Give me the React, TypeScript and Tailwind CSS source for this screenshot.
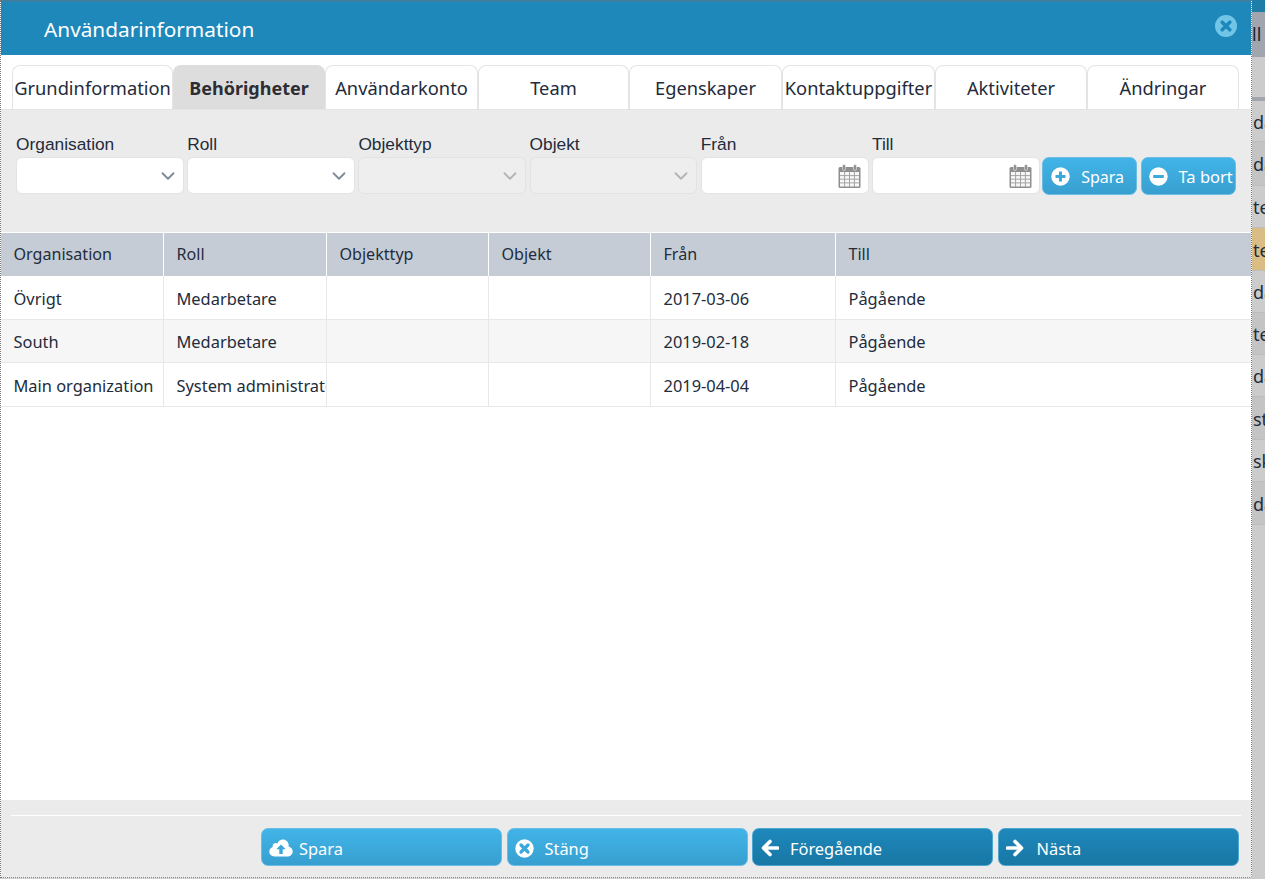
import React from "react";
import { ChevronDown } from "lucide-react";

const segoe = "font-['Noto_Sans','Open_Sans',sans-serif]";

const tabs = [
  { name: "Grundinformation", w: "w-[161px]" },
  { name: "Behörigheter", w: "w-[152px]", active: true },
  { name: "Användarkonto", w: "w-[153px]" },
  { name: "Team", w: "w-[151px]" },
  { name: "Egenskaper", w: "w-[153px]" },
  { name: "Kontaktuppgifter", w: "w-[153px]" },
  { name: "Aktiviteter", w: "w-[152px]" },
  { name: "Ändringar", w: "w-[152px]" },
];

const columns = [
  { name: "Organisation", w: "w-[163px]" },
  { name: "Roll", w: "w-[163px]" },
  { name: "Objekttyp", w: "w-[162px]" },
  { name: "Objekt", w: "w-[162px]" },
  { name: "Från", w: "w-[185px]" },
  { name: "Till", w: "flex-1" },
];

const rows = [
  ["Övrigt", "Medarbetare", "", "", "2017-03-06", "Pågående"],
  ["South", "Medarbetare", "", "", "2019-02-18", "Pågående"],
  ["Main organization", "System administratör", "", "", "2019-04-04", "Pågående"],
];

// what peeks out from the page behind the dialog
const behind = [
  { h: "h-[41px]", bg: "bg-[#cccccc]", text: "da" },
  { h: "h-[44px]", bg: "bg-[#c4c4c4]", text: "da" },
  { h: "h-[42px]", bg: "bg-[#cccccc]", text: "te" },
  { h: "h-[43px]", bg: "bg-[#d9bd85]", text: "te" },
  { h: "h-[42px]", bg: "bg-[#cccccc]", text: "da" },
  { h: "h-[42px]", bg: "bg-[#c4c4c4]", text: "te" },
  { h: "h-[42px]", bg: "bg-[#cccccc]", text: "da" },
  { h: "h-[43px]", bg: "bg-[#c4c4c4]", text: "st" },
  { h: "h-[42px]", bg: "bg-[#cccccc]", text: "sk" },
  { h: "h-[43px]", bg: "bg-[#c4c4c4]", text: "da" },
];

function Calendar() {
  return (
    <svg width="23" height="24" viewBox="0 0 23 24" className="shrink-0">
      <rect x="0.5" y="3" width="22" height="21" rx="1.5" fill="#8f8f8f" />
      <rect x="2" y="8" width="19" height="14.5" fill="#f7f7f7" />
      <path d="M6.6 8v15M11.5 8v15M16.4 8v15M2 11.6h19M2 15.2h19M2 18.9h19" stroke="#a3a3a3" strokeWidth="1" />
      <rect x="4.5" y="0.5" width="3" height="6" rx="1.5" fill="#8f8f8f" stroke="#ebebeb" strokeWidth="0.6" />
      <rect x="15.5" y="0.5" width="3" height="6" rx="1.5" fill="#8f8f8f" stroke="#ebebeb" strokeWidth="0.6" />
    </svg>
  );
}

function CircleIcon({ kind, cut }: { kind: "plus" | "minus" | "close"; cut: string }) {
  return (
    <svg width="19" height="19" viewBox="0 0 19 19" className="shrink-0">
      <circle cx="9.5" cy="9.5" r="9.2" fill="#fff" />
      {kind === "plus" && <path d="M9.5 4.5v10M4.5 9.5h10" stroke={cut} strokeWidth="3" />}
      {kind === "minus" && <path d="M4.2 9.5h10.6" stroke={cut} strokeWidth="3" />}
      {kind === "close" && <path d="M6 6l7 7M13 6l-7 7" stroke={cut} strokeWidth="3.2" strokeLinecap="round" />}
    </svg>
  );
}

function CloudUp() {
  return (
    <svg width="24" height="18" viewBox="0 0 24 18" className="shrink-0">
      <path d="M5.5 17.5C2.5 17.5.3 15.3.3 12.6c0-2.3 1.4-4 3.4-4.7-.1-.3-.1-.6-.1-.9 0-1.7 1.4-3 3.1-3 .6 0 1.2.2 1.7.5C9.5 2 11.5.6 13.8.6c3.3 0 5.9 2.6 5.9 5.8 0 .4 0 .8-.1 1.1 2.3.6 4.1 2.6 4.1 5 0 2.8-2.3 5-5.2 5z" fill="#fff" />
      <path d="M12 5.5l4.7 4.8h-3V15h-3.4v-4.7h-3z" fill="#3ba6d8" />
    </svg>
  );
}

function ArrowIcon({ left }: { left?: boolean }) {
  return (
    <svg width="18" height="18" viewBox="0 0 18 18" className={left ? "shrink-0 -scale-x-100" : "shrink-0"}>
      <path d="M1.5 9h13M9 2.5L15.5 9 9 15.5" fill="none" stroke="#fff" strokeWidth="3.6" strokeLinejoin="round" strokeLinecap="round" />
    </svg>
  );
}

function SelectBox({ label, disabled }: { label: string; disabled?: boolean }) {
  return (
    <div className="w-[167.8px] shrink-0">
      <div className="h-[25px] font-['Liberation_Sans',sans-serif] text-[17.33px] leading-[25px] text-[#222c3c]">{label}</div>
      <div
        className={
          disabled
            ? "flex h-[37px] items-center justify-end rounded-[6px] border border-[#e3e3e3] bg-[#eeeeee] pr-[4px]"
            : "flex h-[37px] items-center justify-end rounded-[6px] border border-[#e3e3e3] bg-white pr-[4px]"
        }
      >
        <ChevronDown size={22} strokeWidth={2} className={disabled ? "text-[#b4b4b4]" : "text-[#7f8a99]"} />
      </div>
    </div>
  );
}

function DateBox({ label }: { label: string }) {
  return (
    <div className="w-[167.8px] shrink-0">
      <div className="h-[25px] font-['Liberation_Sans',sans-serif] text-[17.33px] leading-[25px] text-[#222c3c]">{label}</div>
      <div className="flex h-[37px] items-center justify-end rounded-[6px] border border-[#e3e3e3] bg-white pr-[7px]">
        <Calendar />
      </div>
    </div>
  );
}

export default function App() {
  return (
    <div className={`flex h-[879px] w-[1265px] overflow-hidden bg-[#cccccc] ${segoe}`}>
      {/* dialog */}
      <div className="flex h-[878px] w-[1252px] shrink-0 flex-col rounded-br-[4px] border-x border-b border-dotted border-[#777777] bg-white">
        <div className="h-[2px] shrink-0 bg-[#3d7f9f]" />
        <div className="relative flex h-[53px] shrink-0 items-center bg-[#1e88bb] pt-[2px] pl-[43px] text-[20.8px] text-white">
          Användarinformation
          <svg width="22" height="22" viewBox="0 0 23 23" className="absolute top-[13px] right-[14px]">
            <circle cx="11.5" cy="11.5" r="11.5" fill="#71c6e8" />
            <path d="M7.5 7.5l8 8M15.5 7.5l-8 8" stroke="#1e88bb" strokeWidth="3.8" strokeLinecap="round" />
          </svg>
        </div>

        {/* tabs */}
        <div className="flex h-[55px] shrink-0 items-end border-b border-[#e4e4e4] pl-[11px]">
          {tabs.map((t) => (
            <div
              key={t.name}
              className={
                t.active
                  ? `flex h-[44px] ${t.w} shrink-0 items-center justify-center rounded-t-[8px] bg-[#dddddd] pt-[3px] text-[18px] font-bold whitespace-nowrap text-[#2d2d33]`
                  : `flex h-[44px] ${t.w} shrink-0 items-center justify-center overflow-hidden rounded-t-[8px] border-x border-t border-[#e4e4e4] bg-white text-[18.3px] whitespace-nowrap text-[#232b3b]`
              }
            >
              {t.name}
            </div>
          ))}
        </div>

        {/* filter form */}
        <div className="flex h-[123px] shrink-0 items-start gap-[3.4px] border-b border-white bg-[#ebebeb] pt-[22px] pl-[15px]">
          <SelectBox label="Organisation" />
          <SelectBox label="Roll" />
          <SelectBox label="Objekttyp" disabled />
          <SelectBox label="Objekt" disabled />
          <DateBox label="Från" />
          <DateBox label="Till" />
          <button className="mt-[25px] -ml-px flex h-[38px] w-[95px] shrink-0 items-center gap-[11px] rounded-[7px] border border-[#6cbde3] bg-gradient-to-b from-[#41b4e8] to-[#389fd0] pl-[8px] text-[16px] text-white">
            <CircleIcon kind="plus" cut="#3ba9dc" />
            <span className="mt-[2px]">Spara</span>
          </button>
          <button className="mt-[25px] flex h-[38px] w-[95px] shrink-0 items-center gap-[11px] overflow-hidden rounded-[7px] border border-[#6cbde3] bg-gradient-to-b from-[#41b4e8] to-[#389fd0] pl-[7px] text-[16.5px] whitespace-nowrap text-white">
            <CircleIcon kind="minus" cut="#3ba9dc" />
            <span className="mt-[2px]">Ta bort</span>
          </button>
        </div>

        {/* table */}
        <div className="flex min-h-0 flex-1 flex-col">
          <div className="flex h-[43px] shrink-0 bg-[#c5ccd5] text-[16.1px] text-[#222c3c]">
            {columns.map((c) => (
              <div key={c.name} className={`${c.w} flex items-center border-r border-white pl-[12.5px] last:border-r-0`}>
                {c.name}
              </div>
            ))}
          </div>
          {rows.map((row, i) => (
            <div
              key={row[0]}
              className={
                i === 1
                  ? "flex h-[43.5px] shrink-0 border-b border-[#e8e8e8] bg-[#f6f6f6] text-[16.4px] text-[#222c3c]"
                  : "flex h-[43.5px] shrink-0 border-b border-[#e8e8e8] bg-white text-[16.4px] text-[#222c3c]"
              }
            >
              {row.map((cell, j) => (
                <div
                  key={j}
                  className={`${columns[j].w} flex items-center overflow-hidden border-r border-[#e8e8e8] pt-[4px] pl-[12.5px] whitespace-nowrap last:border-r-0`}
                >
                  {cell}
                </div>
              ))}
            </div>
          ))}
        </div>

        {/* footer */}
        <div className="h-[77px] shrink-0 bg-[#ebebeb] pt-[15px]">
          <div className="mx-[10px] h-px bg-white" />
          <div className="flex justify-end gap-[4.5px] pt-[12px] pr-[12.5px]">
            <button className="flex h-[38px] w-[241px] items-center gap-[6px] rounded-[7px] border border-[#6cbde3] bg-gradient-to-b from-[#41b4e8] to-[#389fd0] pt-[2px] pl-[7px] text-[16.4px] text-white">
              <CloudUp />
              <span className="mt-[2px]">Spara</span>
            </button>
            <button className="flex h-[38px] w-[241px] items-center gap-[11px] rounded-[7px] border border-[#6cbde3] bg-gradient-to-b from-[#41b4e8] to-[#389fd0] pt-[2px] pl-[7px] text-[16.4px] text-white">
              <CircleIcon kind="close" cut="#3ba9dc" />
              <span className="mt-[2px]">Stäng</span>
            </button>
            <button className="flex h-[38px] w-[241px] items-center gap-[11px] rounded-[7px] border border-[#4ba6d0] bg-gradient-to-b from-[#1e88bb] to-[#1877a5] pt-[2px] pl-[8px] text-[16.4px] text-white">
              <ArrowIcon left />
              <span className="mt-[2px]">Föregående</span>
            </button>
            <button className="flex h-[38px] w-[241px] items-center gap-[13px] rounded-[7px] border border-[#4ba6d0] bg-gradient-to-b from-[#1e88bb] to-[#1877a5] pt-[2px] pl-[7px] text-[16.4px] text-white">
              <ArrowIcon />
              <span className="mt-[2px]">Nästa</span>
            </button>
          </div>
        </div>
      </div>

      {/* page behind */}
      <div className="flex min-w-0 flex-1 flex-col overflow-hidden text-[18px] text-[#222c3c]">
        <div className="h-[12px] shrink-0 bg-[#1e7ea8]" />
        <div className="flex h-[45px] shrink-0 items-center bg-[#a0a5ae] text-[#1c2433]">ll</div>
        <div className="h-[40px] shrink-0 bg-[#cccccc]" />
        <div className="h-[4px] shrink-0 bg-[#a0a5ae]" />
        {behind.map((b, i) => (
          <div key={i} className={`${b.h} ${b.bg} flex shrink-0 items-center border-b border-[#bdbdbd] pt-[2px] pl-px whitespace-nowrap`}>
            {b.text}
          </div>
        ))}
      </div>
    </div>
  );
}
